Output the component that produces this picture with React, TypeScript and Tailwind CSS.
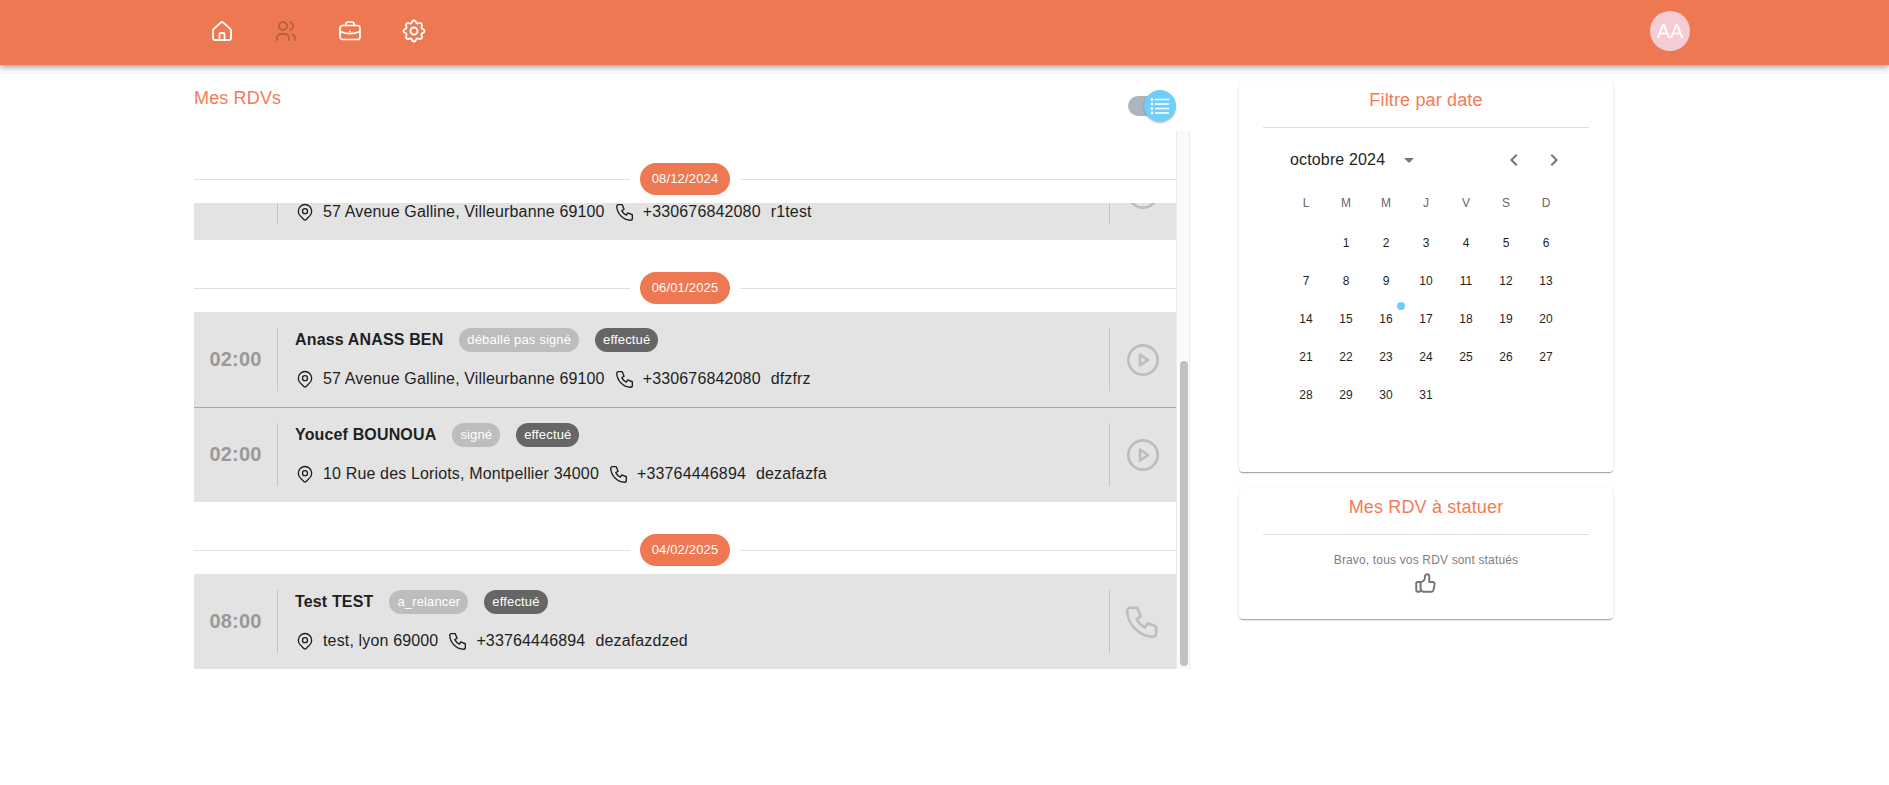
import { TbMapPin, TbPhone, TbSettings, TbThumbUp, TbUsers } from "react-icons/tb";

interface Appointment {
  time?: string;
  name?: string;
  status?: string;
  address: string;
  phone: string;
  note: string;
  action: "play" | "call";
}

const WEEKDAYS = ["L", "M", "M", "J", "V", "S", "D"];

// octobre 2024 starts on a Tuesday
const DAYS: (number | null)[] = [null, ...Array.from({ length: 31 }, (_, i) => i + 1)];

function DateSeparator({ date }: { date: string }) {
  return (
    <div className="flex items-center pt-8 pb-2">
      <div className="h-px flex-1 bg-[#e0e0e0]" />
      <span className="mx-[10px] flex h-8 items-center rounded-2xl bg-[#ee7851] px-3 text-[13px] tracking-[0.15px] text-white">
        {date}
      </span>
      <div className="h-px flex-1 bg-[#e0e0e0]" />
    </div>
  );
}

function HomeIcon() {
  return (
    <svg width="24" height="24" viewBox="0 0 24 24" fill="none" stroke="currentColor" strokeWidth="1.8" strokeLinecap="round" strokeLinejoin="round">
      <path d="M3 10.6 10.7 3.6a2 2 0 0 1 2.6 0L21 10.6V19a2 2 0 0 1-2 2H5a2 2 0 0 1-2-2z" />
      <path d="M9.5 21v-6a1 1 0 0 1 1-1h3a1 1 0 0 1 1 1v6" />
    </svg>
  );
}

function BriefcaseIcon() {
  return (
    <svg width="24" height="24" viewBox="0 0 24 24" fill="none" stroke="currentColor" strokeWidth="1.7" strokeLinecap="round" strokeLinejoin="round">
      <rect x="2" y="6.5" width="20" height="14" rx="2.5" />
      <path d="M8 6.5V5a2 2 0 0 1 2-2h4a2 2 0 0 1 2 2v1.5" />
      <path d="M2 12.5c6 2.6 14 2.6 20 0" />
      <path d="M12 12.4v.2" strokeWidth="2" />
    </svg>
  );
}

function ListIcon() {
  return (
    <svg width="20" height="18" viewBox="0 0 20 18" fill="white">
      <circle cx="2" cy="2.5" r="1.4" />
      <circle cx="2" cy="7" r="1.4" />
      <circle cx="2" cy="11.5" r="1.4" />
      <circle cx="2" cy="16" r="1.4" />
      <rect x="5" y="1.7" width="14" height="1.6" />
      <rect x="5" y="6.2" width="14" height="1.6" />
      <rect x="5" y="10.7" width="14" height="1.6" />
      <rect x="5" y="15.2" width="14" height="1.6" />
    </svg>
  );
}

function PlayIcon() {
  return (
    <svg width="36" height="36" viewBox="0 0 36 36" fill="none" stroke="currentColor" strokeWidth="2.7" strokeLinejoin="round">
      <circle cx="18" cy="18" r="14.7" />
      <path d="M15 12.5 23 18l-8 5.500z" />
    </svg>
  );
}

function AppointmentRow({ item, divided }: { item: Appointment; divided?: boolean }) {
  return (
    <div className={`flex h-[95px] shrink-0 bg-[#e3e3e3] pb-4 ${divided ? "border-t border-[#a8a8a8] pt-[15px]" : "pt-4"}`}>
      <div className="flex w-[84px] shrink-0 items-center justify-center border-r border-[#c4c4c4] pb-[2px] text-[20px] font-bold tracking-[0.15px] text-[#999999]">
        {item.time}
      </div>
      <div className="min-w-0 flex-1 pl-[17px] tracking-[0.15px] text-[#1f1f1f]">
        <div className="flex h-6 items-center">
          {item.name && (
            <>
              <span className="mr-4 font-bold">{item.name}</span>
              <span className="mr-4 flex h-6 items-center rounded-xl bg-[#bdbdbd] px-2 text-[13px] text-white">
                {item.status}
              </span>
              <span className="flex h-6 items-center rounded-xl bg-[#666666] px-2 text-[13px] text-white">
                effectué
              </span>
            </>
          )}
        </div>
        <div className="mt-[15px] flex h-6 items-center">
          <TbMapPin size={20} strokeWidth={1.6} className="mr-2 shrink-0" />
          <span className="mr-[10px]">{item.address}</span>
          <TbPhone size={22} strokeWidth={1.5} className="mr-[7px] -ml-px shrink-0" />
          <span className="mr-[10px]">{item.phone}</span>
          <span>{item.note}</span>
        </div>
      </div>
      <div className="flex w-[67px] shrink-0 items-center justify-center border-l border-[#c4c4c4] pr-px text-[#bdbdbd]">
        {item.action === "play" ? <PlayIcon /> : <TbPhone size={41} strokeWidth={1.5} />}
      </div>
    </div>
  );
}

function Card({ title, className, children }: { title: string; className?: string; children: React.ReactNode }) {
  return (
    <div className={`rounded bg-white shadow-[0_2px_1px_-1px_rgba(0,0,0,0.2),0_1px_1px_0_rgba(0,0,0,0.14),0_1px_3px_0_rgba(0,0,0,0.12)] ${className ?? ""}`}>
      <div className="pt-2 pb-4 text-center text-[18px] leading-[22px] tracking-[0.15px] text-[#f47b55]">{title}</div>
      <div className="mx-6 h-px bg-[#e0e0e0]" />
      {children}
    </div>
  );
}

export default function App() {
  return (
    <div className="h-screen overflow-hidden bg-white font-['Liberation_Sans',Arial,sans-serif] text-base text-[#1f1f1f]">
      {/* Top bar */}
      <header className="relative z-10 flex h-[65px] items-center bg-[#ee7851] pr-[199px] pb-[3px] pl-[210px] text-white shadow-[0_2px_4px_-1px_rgba(0,0,0,0.2),0_4px_5px_0_rgba(0,0,0,0.14),0_1px_10px_0_rgba(0,0,0,0.12)]">
        <nav className="flex flex-1 items-center gap-10">
          <HomeIcon />
          <TbUsers size={24} strokeWidth={1.8} className="text-[#b8603f]" />
          <BriefcaseIcon />
          <TbSettings size={28} strokeWidth={1.6} className="-mx-[2px]" />
        </nav>
        <div className="flex size-10 items-center justify-center rounded-full bg-[#f5cbd4] text-[20px] text-white">AA</div>
      </header>

      <main className="flex gap-[49px] pt-4 pl-[194px]">
        {/* RDV list */}
        <section className="w-[996px]">
          <div className="flex h-[50px] items-start justify-between pr-[14px]">
            <h1 className="text-[18px] leading-[34px] tracking-[0.15px] text-[#f47b55]">Mes RDVs</h1>
            <div className="relative mt-[15px] h-5 w-12 rounded-l-full">
              <div className="h-5 w-8 rounded-full bg-[#adb5bd]" />
              <div className="absolute top-[-6px] right-0 flex size-8 items-center justify-center rounded-full bg-[#6ecffb] shadow-[0_1px_2px_rgba(0,0,0,0.25)]">
                <ListIcon />
              </div>
            </div>
          </div>

          <div className="flex h-[538px]">
            <div className="w-[982px] shrink-0">
              <DateSeparator date="08/12/2024" />
              <div className="flex h-[37px] flex-col justify-end overflow-hidden">
                <AppointmentRow
                  item={{
                    address: "57 Avenue Galline, Villeurbanne 69100",
                    phone: "+330676842080",
                    note: "r1test",
                    action: "play",
                  }}
                />
              </div>

              <DateSeparator date="06/01/2025" />
              <AppointmentRow
                item={{
                  time: "02:00",
                  name: "Anass ANASS BEN",
                  status: "déballé pas signé",
                  address: "57 Avenue Galline, Villeurbanne 69100",
                  phone: "+330676842080",
                  note: "dfzfrz",
                  action: "play",
                }}
              />
              <AppointmentRow
                divided
                item={{
                  time: "02:00",
                  name: "Youcef BOUNOUA",
                  status: "signé",
                  address: "10 Rue des Loriots, Montpellier 34000",
                  phone: "+33764446894",
                  note: "dezafazfa",
                  action: "play",
                }}
              />

              <DateSeparator date="04/02/2025" />
              <AppointmentRow
                item={{
                  time: "08:00",
                  name: "Test TEST",
                  status: "a_relancer",
                  address: "test, lyon 69000",
                  phone: "+33764446894",
                  note: "dezafazdzed",
                  action: "call",
                }}
              />
            </div>
            {/* Scrollbar */}
            <div className="h-full w-[14px] shrink-0 border-x border-[#ececec] bg-[#fafafa] pt-[230px] pb-[3px] pl-[2.5px]">
              <div className="h-full w-2 rounded bg-[#c1c1c1]" />
            </div>
          </div>
        </section>

        {/* Side cards */}
        <aside className="w-[374px] shrink-0">
          <Card title="Filtre par date" className="h-[391px]">
            <div className="mt-[17px] flex h-[30px] items-center pr-[47px] pl-[51px]">
              <span className="tracking-[0.15px]">octobre 2024</span>
              <svg width="24" height="24" viewBox="0 0 24 24" fill="#757575" className="ml-3">
                <path d="M7 10l5 5 5-5z" />
              </svg>
              <div className="ml-auto flex gap-4">
                <svg width="24" height="24" viewBox="0 0 24 24" fill="#757575">
                  <path d="M15.41 7.41 14 6l-6 6 6 6 1.41-1.41L10.83 12z" />
                </svg>
                <svg width="24" height="24" viewBox="0 0 24 24" fill="#757575">
                  <path d="M10 6 8.59 7.41 13.17 12l-4.58 4.59L10 18l6-6z" />
                </svg>
              </div>
            </div>
            <div className="mt-[9px] ml-[47px] grid w-[280px] grid-cols-7 auto-rows-[38px] items-center justify-items-center text-xs">
              {WEEKDAYS.map((day, i) => (
                <span key={i} className="text-[#666666]">
                  {day}
                </span>
              ))}
            </div>
            <div className="mt-[2px] ml-[47px] grid w-[280px] grid-cols-7 auto-rows-[38px] items-center justify-items-center text-xs">
              {DAYS.map((day, i) => (
                <span key={i} className="relative text-[#1f1f1f]">
                  {day}
                  {day === 16 && <span className="absolute top-[-9px] right-[-12px] size-2 rounded-full bg-[#6ecffb]" />}
                </span>
              ))}
            </div>
          </Card>

          <Card title="Mes RDV à statuer" className="mt-4 h-[131px]">
            <div className="mt-4 flex flex-col items-center">
              <span className="text-xs leading-[18px] tracking-[0.16px] text-[#808080]">Bravo, tous vos RDV sont statués</span>
              <TbThumbUp size={26} strokeWidth={1.8} className="mt-px text-[#757575]" />
            </div>
          </Card>
        </aside>
      </main>
    </div>
  );
}
